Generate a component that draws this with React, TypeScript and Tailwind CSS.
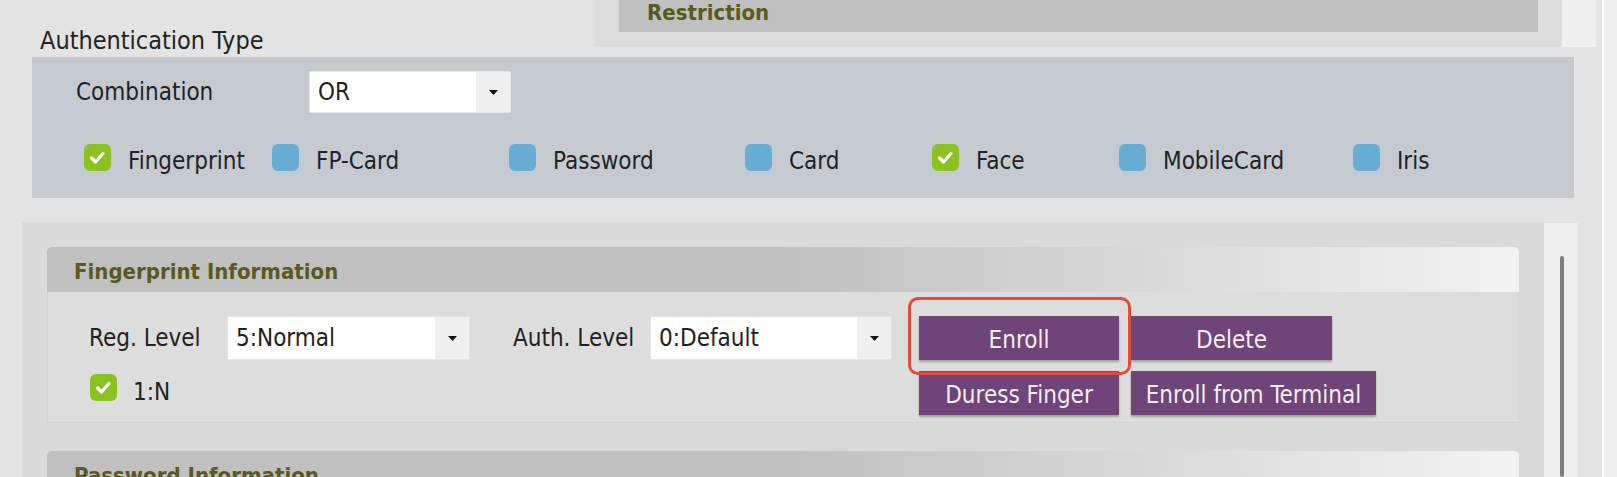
import React from "react";

type Box = { label: string; checked: boolean; width?: string };

const authTypes: Box[] = [
  { label: "Fingerprint", checked: true, width: "w-[188px]" },
  { label: "FP-Card", checked: false, width: "w-[237px]" },
  { label: "Password", checked: false, width: "w-[236px]" },
  { label: "Card", checked: false, width: "w-[187px]" },
  { label: "Face", checked: true, width: "w-[187px]" },
  { label: "MobileCard", checked: false, width: "w-[234px]" },
  { label: "Iris", checked: false },
];

function CheckBox({ checked }: { checked: boolean }) {
  return (
    <span
      className={
        checked
          ? "w-[27px] h-[27px] rounded-[6px] bg-[#8cc21f] flex items-center justify-center shrink-0"
          : "w-[27px] h-[27px] rounded-[6px] bg-[#66acd3] shrink-0"
      }
    >
      {checked && (
        <svg width="27" height="27" viewBox="0 0 27 27">
          <path
            d="M7.5 14 L11.5 18 L19 9.5"
            fill="none"
            stroke="#ffffff"
            strokeWidth="3.2"
            strokeLinecap="round"
            strokeLinejoin="round"
          />
        </svg>
      )}
    </span>
  );
}

function Select({ value, width, height }: { value: string; width: string; height: string }) {
  return (
    <div className={`${width} ${height} bg-white border border-[#e4e4e4] flex shrink-0`}>
      <span className="flex-1 pl-[8px] flex items-center">{value}</span>
      <span className="w-[34px] bg-[#efefef] flex items-center justify-center">
        <svg width="9" height="5" viewBox="0 0 9 5">
          <polygon points="0,0 9,0 4.5,5" fill="#111111" />
        </svg>
      </span>
    </div>
  );
}

function PurpleButton({ label, width }: { label: string; width: string }) {
  return (
    <button
      className={`${width} h-[44px] pt-[4px] bg-[#6e4479] text-[#f5eef5] shadow-[0_2px_2px_rgba(0,0,0,0.28)] flex items-center justify-center`}
    >
      {label}
    </button>
  );
}

function SectionHeader({ title }: { title: string }) {
  return (
    <div className="h-[45px] shrink-0 rounded-t-[5px] bg-linear-to-r from-[#c0c0c0] from-50% to-[#f3f3f3] pl-[27px] pt-[12px] font-bold text-[22px] leading-[26px] text-[#5b591e]">
      {title}
    </div>
  );
}

export default function App() {
  return (
    <div className="w-[1617px] h-[477px] overflow-hidden bg-[#e3e3e3] flex font-['DejaVu_Sans_Condensed','Liberation_Sans',sans-serif] text-[24px] text-[#222222]">
      <div className="w-[1602px] flex flex-col shrink-0">
        {/* top row: label + restriction panel */}
        <div className="h-[57px] flex items-start shrink-0">
          <div className="w-[595px] pl-[40px] pt-[27px] text-[25px] leading-[28px] shrink-0">Authentication Type</div>
          <div className="w-[967px] h-[47px] bg-[#dcdcdc] px-[24px] shrink-0">
            <div className="h-[32px] bg-[#c0c0c0] pl-[28px] font-bold text-[22px] leading-[25px] text-[#5b591e]">
              Restriction
            </div>
          </div>
          <div className="w-[34px] h-[47px] bg-[#efefef] shrink-0" />
        </div>

        {/* authentication type panel */}
        <div className="ml-[32px] w-[1542px] h-[141px] bg-[#c5cad1] shrink-0 pl-[44px] pt-[14px]">
          <div className="flex items-center h-[42px]">
            <span className="w-[233px]">Combination</span>
            <Select value="OR" width="w-[202px]" height="h-[42px]" />
          </div>
          <div className="flex items-center mt-[31px] ml-[8px] h-[27px]">
            {authTypes.map((t) => (
              <div key={t.label} className={`${t.width ?? ""} flex items-center gap-[17px] shrink-0`}>
                <CheckBox checked={t.checked} />
                <span className="leading-[20px] pt-[6px]">{t.label}</span>
              </div>
            ))}
          </div>
        </div>

        {/* lower scroll area */}
        <div className="flex flex-1 min-h-0 mt-[24px]">
          <div className="ml-[22px] w-[1522px] bg-[#dadada] pt-[25px] px-[25px] overflow-hidden flex flex-col shrink-0">
            <SectionHeader title="Fingerprint Information" />
            <div className="h-[131px] shrink-0 bg-[#dddddd] border border-t-0 border-[#d3d3d3] pl-[41px] pt-[24px] flex items-start">
              <div className="flex flex-col">
                <div className="flex items-center h-[44px]">
                  <span className="w-[138px]">Reg. Level</span>
                  <Select value="5:Normal" width="w-[243px]" height="h-[44px]" />
                  <span className="ml-[43px] w-[137px]">Auth. Level</span>
                  <Select value="0:Default" width="w-[242px]" height="h-[44px]" />
                </div>
                <div className="flex items-center mt-[14px] ml-[1px] gap-[16px] h-[27px]">
                  <CheckBox checked={true} />
                  <span className="leading-[20px] pt-[8px]">1:N</span>
                </div>
              </div>
              <div className="ml-[27px] flex flex-col gap-[11px]">
                <div className="flex gap-[12px]">
                  <div className="relative">
                    <PurpleButton label="Enroll" width="w-[200px]" />
                    <div className="absolute left-[-11px] top-[-19px] w-[223px] h-[78px] border-[3px] border-[#e4493a] rounded-[10px] pointer-events-none" />
                  </div>
                  <PurpleButton label="Delete" width="w-[201px]" />
                </div>
                <div className="flex gap-[12px]">
                  <PurpleButton label="Duress Finger" width="w-[200px]" />
                  <PurpleButton label="Enroll from Terminal" width="w-[245px]" />
                </div>
              </div>
            </div>
            <div className="mt-[28px]">
              <SectionHeader title="Password Information" />
            </div>
          </div>
          <div className="w-[34px] bg-[#efefef] pt-[33px] pl-[16px] mt-[1px] shrink-0">
            <div className="w-[4px] h-full bg-[#7d7d7d] rounded-[2px]" />
          </div>
        </div>
      </div>
      <div className="flex-1 border-l-2 border-white bg-[#f0f0f0]" />
    </div>
  );
}
